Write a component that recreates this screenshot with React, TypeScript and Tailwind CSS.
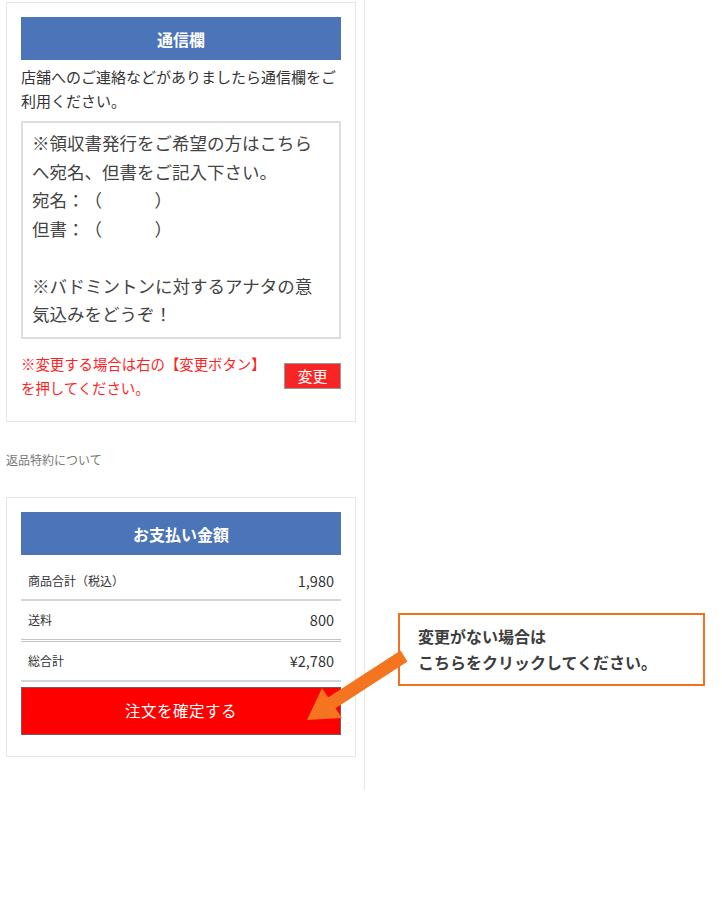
import React from "react"

const font = { fontFamily: '"Noto Sans CJK JP", "Noto Sans", sans-serif' }

function SectionHeader({ title }: { title: string }) {
  return (
    <div className="h-[43px] bg-[#4b74b9] flex items-center justify-center text-white font-bold text-[16px]">
      {title}
    </div>
  )
}

function PriceRow({
  label,
  value,
  className,
}: {
  label: string
  value: string
  className: string
}) {
  return (
    <div className={"flex items-center justify-between pl-[7px] pr-[7px] " + className}>
      <span className="text-[12px] text-[#333]">{label}</span>
      <span className="text-[14.5px] text-[#333]">{value}</span>
    </div>
  )
}

export default function App() {
  return (
    <div
      className="relative w-[722px] h-[900px] bg-white flex items-start [text-spacing-trim:space-all]"
      style={font}
    >
      {/* left column */}
      <div className="w-[365px] h-[790px] border-r border-[#e6e6e6] pl-[6px] pr-[8px] pt-[2px] shrink-0">
        {/* 通信欄 card */}
        <div className="border border-[#e6e6e6] px-[14px] pt-[14px] pb-[21px]">
          <SectionHeader title="通信欄" />
          <p className="mt-[5px] text-[15px] leading-[24px] text-[#333]">
            店舗へのご連絡などがありましたら通信欄をご利用ください。
          </p>
          <div className="mt-[8px] h-[218px] border-2 border-[#dedede] pl-[9px] pt-[6px] text-[17.5px] leading-[28.5px] text-[#444]">
            <div>※領収書発行をご希望の方はこちら</div>
            <div>へ宛名、但書をご記入下さい。</div>
            <div>宛名：（　　　）</div>
            <div>但書：（　　　）</div>
            <div>&nbsp;</div>
            <div>※バドミントンに対するアナタの意</div>
            <div>気込みをどうぞ！</div>
          </div>
          <div className="mt-[13px] flex items-center justify-between">
            <p className="text-[14.4px] leading-[24px] text-[#ff1f1f]">
              ※変更する場合は右の【変更ボタン】
              <br />
              を押してください。
            </p>
            <button className="w-[57px] h-[26px] bg-[#f72525] border border-[#9a9a9a] text-white text-[15px] flex items-center justify-center">
              変更
            </button>
          </div>
        </div>

        <p className="mt-[29px] text-[12px] leading-[18px] text-[#777]">返品特約について</p>

        {/* お支払い金額 card */}
        <div className="mt-[28px] border border-[#e6e6e6] px-[14px] pt-[14px] pb-[21px]">
          <SectionHeader title="お支払い金額" />
          <PriceRow
            label="商品合計（税込）"
            value="1,980"
            className="h-[46px] pt-[8px] border-b-2 border-[#d6d6d6]"
          />
          <PriceRow
            label="送料"
            value="800"
            className="h-[41px] border-b-[3px] border-double border-[#c4c4c4]"
          />
          <PriceRow
            label="総合計"
            value="¥2,780"
            className="h-[40px] border-b-2 border-[#d6d6d6]"
          />
          <button className="mt-[5px] w-full h-[48px] bg-[#ff0000] border border-[#7a5a5a] text-white text-[15.5px] tracking-[0.5px]">
            注文を確定する
          </button>
        </div>
      </div>

      {/* right side callout */}
      <div className="pt-[613px] pl-[33px]">
        <div className="w-[307px] h-[73px] border-2 border-[#f2711f] pl-[18px] pt-[8px] text-[16px] leading-[26px] font-bold text-[#3d3d3d]">
          変更がない場合は
          <br />
          こちらをクリックしてください。
        </div>
      </div>

      {/* arrow pointing at the confirm button */}
      <svg
        className="absolute left-[300px] top-[645px]"
        width="112"
        height="82"
        viewBox="0 0 112 82"
      >
        <line x1="104" y1="11" x2="30" y2="59" stroke="#f47420" strokeWidth="13" />
        <polygon points="7,75 42,73 22,43" fill="#f47420" />
      </svg>
    </div>
  )
}
